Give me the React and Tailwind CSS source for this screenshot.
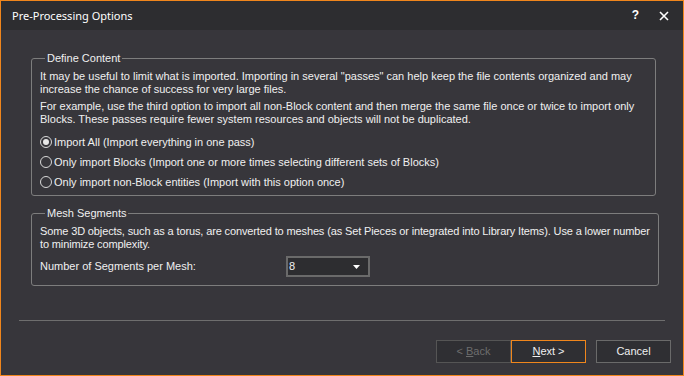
import React, { useState } from 'react';

const Radio = ({ checked, label, onClick }) => (
  <div className="flex items-center h-[20px] cursor-default" onClick={onClick}>
    <span className="w-[12px] h-[12px] rounded-full border border-[#d8d8d8] flex items-center justify-center mr-[2px]">
      {checked && <span className="w-[6px] h-[6px] rounded-full bg-[#e8e8e8]" />}
    </span>
    <span>{label}</span>
  </div>
);

const App = () => {
  const [mode, setMode] = useState(0);

  const options = [
    'Import All (Import everything in one pass)',
    'Only import Blocks (Import one or more times selecting different sets of Blocks)',
    'Only import non-Block entities (Import with this option once)',
  ];

  return (
    <div
      className="w-[684px] h-[376px] border border-[#f0861c] bg-[#37363b] flex flex-col text-[#f0f0f0] text-[11px] leading-[13px]"
      style={{ fontFamily: '"Liberation Sans", Arial, sans-serif' }}
    >
      <div className="h-[29px] bg-[#2d2d30] flex items-center pl-[11px] pr-[14px] shrink-0">
        <span className="text-[11px] text-white flex-1" style={{ fontFamily: '"Noto Sans", sans-serif' }}>
          Pre-Processing Options
        </span>
        <span className="text-[12px] font-bold text-white mr-[20px]">?</span>
        <svg width="10" height="10" viewBox="0 0 10 10" className="text-white">
          <path d="M1 1L9 9M9 1L1 9" stroke="currentColor" strokeWidth="1.6" />
        </svg>
      </div>

      <div className="pl-[30px] pr-[27px] pt-[22px]">
        <fieldset className="border border-[#7d7d7d] rounded-[3px] px-[8px] pb-[3px] whitespace-nowrap">
          <legend className="ml-[5px] px-[2px]">Define Content</legend>
          <p className="mt-[5px]">
            It may be useful to limit what is imported. Importing in several "passes" can help keep the file contents organized and may
            <br />
            increase the chance of success for very large files.
          </p>
          <p className="mt-[4px]">
            For example, use the third option to import all non-Block content and then merge the same file once or twice to import only
            <br />
            Blocks. These passes require fewer system resources and objects will not be duplicated.
          </p>
          <div className="mt-[6px]">
            {options.map((o, i) => (
              <Radio key={i} checked={mode === i} label={o} onClick={() => setMode(i)} />
            ))}
          </div>
        </fieldset>

        <fieldset className="mt-[11px] border border-[#7d7d7d] rounded-[3px] px-[8px] pb-[8px] whitespace-nowrap">
          <legend className="ml-[5px] px-[2px]">Mesh Segments</legend>
          <p className="mt-[5px] tracking-[-0.13px]">
            Some 3D objects, such as a torus, are converted to meshes (as Set Pieces or integrated into Library Items). Use a lower number
            <br />
            to minimize complexity.
          </p>
          <div className="flex items-center mt-[5px]">
            <span className="w-[246px]">Number of Segments per Mesh:</span>
            <div className="w-[84px] h-[21px] border-2 border-[#6a6a6a] bg-[#2d2d30] flex items-center pl-[1px] pr-[8px]">
              <span className="flex-1">8</span>
              <svg width="7" height="4" viewBox="0 0 7 4">
                <path d="M0 0H7L3.5 4Z" fill="#ffffff" />
              </svg>
            </div>
          </div>
        </fieldset>
      </div>

      <div className="flex-1" />
      <div className="mx-[18px] h-[1px] bg-[#6e6e6e]" />
      <div className="flex justify-end pr-[12px] pt-[19px] pb-[12px]">
        <button className="w-[75px] h-[23px] border border-[#555555] bg-[#2f2f33] text-[#6d6d6d]">
          &lt; <span className="underline">B</span>ack
        </button>
        <button className="w-[75px] h-[23px] border border-[#f0861c] bg-[#2f2f33] text-[#f0f0f0]">
          <span className="underline">N</span>ext &gt;
        </button>
        <button className="ml-[10px] w-[75px] h-[23px] border border-[#6a6a6a] bg-[#2f2f33] text-[#f0f0f0]">
          Cancel
        </button>
      </div>
    </div>
  );
};

export default App;
